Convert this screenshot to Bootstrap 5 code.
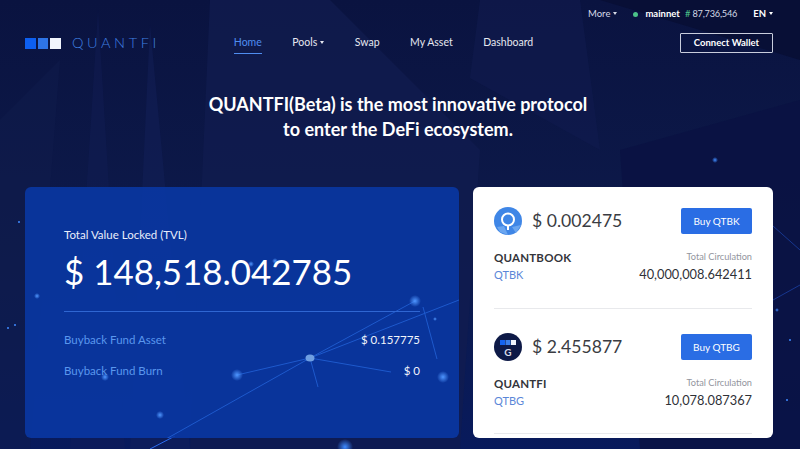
<!DOCTYPE html>
<html lang="en">
<head>
  <meta charset="UTF-8">
  <title>QUANTFI</title>
  <link href="https://cdn.jsdelivr.net/npm/bootstrap@5.3.0/dist/css/bootstrap.min.css" rel="stylesheet">
  <style>
    html, body { height: 449px; overflow: hidden; }
    body { background: #0b1440; font-family: Lato, "Liberation Sans", sans-serif; color: #fff; }
    .page-wrap { height: 449px; overflow: hidden; }
    .bg-art { position: absolute; top: 0; left: 0; width: 800px; height: 449px; z-index: 0; }
    .page-inner { position: relative; z-index: 1; padding: 0 27px 0 25px; }
    .top-bar { height: 28px; font-size: 9.5px; gap: 16px; }
    .top-bar .dropdown-toggle::after, .main-nav .dropdown-toggle::after { margin-left: 3px; border-top-width: 3px; border-left-width: 2.5px; border-right-width: 2.5px; vertical-align: 2px; }
    .top-link { color: #d5d9e6; }
    .net-dot { width: 5px; height: 5px; border-radius: 50%; background: #4cc38a; margin-right: 7px; }
    .block-hash { color: #4cc38a; margin: 0 2px 0 5px; }
    .block-num { font-size: 9.2px; letter-spacing: -.2px; }
    .head-row { height: 28px; margin-top: 1px; }
    .logo-box { gap: 2px; width: 36px; }
    .logo-sq { width: 11px; height: 11px; }
    .logo-text { font-size: 14.5px; font-weight: 300; letter-spacing: 3.6px; color: #3f7fe0; margin-left: 11px; line-height: 1; }
    .main-nav { margin-left: 74px; font-size: 10.5px; gap: 30.5px; }
    .main-nav a { color: #e6e8f0; text-decoration: none; padding: 3px 0 2px; border-bottom: 1px solid transparent; }
    .main-nav a.nav-on { color: #4f8df0; border-bottom-color: #4f8df0; }
    .wallet-btn { width: 93px; height: 20px; border: 1px solid #c9cddd; border-radius: 1px; font-size: 9.5px; font-weight: 700; color: #fff; background: transparent; padding: 0; }
    .hero-title { font-size: 18px; line-height: 25px; font-weight: 700; margin: 35px 0 45px; padding-right: 2px; }
    .panel-row { gap: 14px; height: 251px; }
    .tvl-panel { width: 434px; background: rgba(9, 56, 165, .88); border-radius: 6px; padding: 40px 39px 0; position: relative; }
    .tvl-label { font-size: 11.5px; line-height: 16px; color: #e9eefb; }
    .tvl-value { font-size: 34.9px; line-height: 44px; font-weight: 400; margin: 7px 0 17px; }
    .tvl-rule { height: 1px; background: #2f66d2; margin-bottom: 20px; }
    .fund-row { font-size: 11.5px; line-height: 16px; height: 31px; }
    .fund-name { color: #5a97ee; }
    .fund-value { font-size: 11.5px; color: #f1f4fb; }
    .coin-panel { width: 300px; background: #fff; border-radius: 6px; padding: 20px 21px 0; color: #2f3137; }
    .coin-item { height: 102px; border-bottom: 1px solid #e8e9ec; }
    .coin-item + .coin-item { height: 125px; padding-top: 24px; }
    .coin-price { font-size: 17.6px; line-height: 28px; margin-left: 10px; color: #3a3c42; }
    .coin-icon { width: 28px; height: 28px; display: block; }
    .buy-btn { width: 71px; height: 26px; padding: 0; font-size: 10px; background: #2a6de4; border: 0; border-radius: 2px; color: #fff; }
    .coin-name { font-size: 11.5px; line-height: 16px; font-weight: 700; color: #33353b; letter-spacing: .2px; }
    .coin-sym { font-size: 11px; line-height: 18px; color: #5b87d8; }
    .circ-label { font-size: 9.2px; line-height: 13px; color: #92959d; }
    .circ-value { font-size: 12.8px; line-height: 19px; color: #2f3137; margin-top: 2px; }
    .coin-meta { margin-top: 15px; }
  </style>
</head>
<body>
  <div class="page-wrap position-relative">
    <svg class="bg-art" viewBox="0 0 800 449" aria-hidden="true">
      <defs>
        <linearGradient id="base" x1="0" y1="0" x2="0" y2="1">
          <stop offset="0" stop-color="#0a1340"/>
          <stop offset=".55" stop-color="#0d1a4b"/>
          <stop offset="1" stop-color="#081a5c"/>
        </linearGradient>
        <radialGradient id="glow">
          <stop offset="0" stop-color="#3f8bff"/>
          <stop offset="1" stop-color="#3f8bff" stop-opacity="0"/>
        </radialGradient>
      </defs>
      <rect width="800" height="449" fill="url(#base)"/>
      <polygon points="210,0 330,0 480,150 460,449 190,449" fill="#111d50" opacity=".7"/>
      <polygon points="98,10 70,449 125,449" fill="#13205a" opacity=".35"/>
      <polygon points="150,25 130,449 190,449" fill="#14225c" opacity=".45"/>
      <polygon points="0,120 60,60 30,449 0,449" fill="#101b4c" opacity=".5"/>
      <polygon points="480,0 580,0 600,150 470,78" fill="#101b4e" opacity=".6"/>
      <polygon points="600,0 800,60 800,0" fill="#080f36"/>
      <polygon points="620,150 800,100 800,449 640,449" fill="#0a1242" opacity=".8"/>
      <path d="M150 449 L175 436" stroke="#2c6df0" fill="none"/>
      <path d="M773 226 L800 250 M773 300 L800 285" stroke="#1f4fc0" fill="none" opacity=".6"/>
      <circle cx="715" cy="160" r="3" fill="url(#glow)"/>
      <circle cx="345" cy="447" r="8" fill="url(#glow)"/>
      <circle cx="777" cy="310" r="2" fill="url(#glow)"/>
      <circle cx="19" cy="222" r="1" fill="#3f8bff"/>
      <circle cx="15" cy="325" r="1" fill="#3f8bff"/>
      <circle cx="8" cy="328" r="1" fill="#3f8bff"/>
      <circle cx="787" cy="400" r="1" fill="#3f8bff"/>
      <circle cx="790" cy="340" r="1" fill="#3f8bff"/>
    </svg>

    <div class="page-inner">
      <div class="top-bar d-flex justify-content-end align-items-center">
        <a class="top-link dropdown-toggle text-decoration-none" href="#">More</a>
        <div class="d-flex align-items-center">
          <span class="net-dot"></span><span class="fw-bold">mainnet</span><span class="block-hash">#</span><span class="top-link block-num">87,736,546</span>
        </div>
        <a class="text-white fw-bold dropdown-toggle text-decoration-none" href="#">EN</a>
      </div>

      <div class="head-row d-flex align-items-center">
        <div class="d-flex align-items-center">
          <div class="logo-box d-flex">
            <span class="logo-sq" style="background:#0d5ff0"></span>
            <span class="logo-sq" style="background:#2e74e6"></span>
            <span class="logo-sq" style="background:#f1f5fd"></span>
          </div>
          <span class="logo-text">QUANTFI</span>
        </div>
        <nav class="main-nav d-flex align-items-center">
          <a class="nav-on" href="#">Home</a>
          <a class="dropdown-toggle" href="#">Pools</a>
          <a href="#">Swap</a>
          <a href="#">My Asset</a>
          <a href="#">Dashboard</a>
        </nav>
        <button class="wallet-btn btn ms-auto">Connect Wallet</button>
      </div>

      <h1 class="hero-title text-center">QUANTFI(Beta) is the most innovative protocol<br>to enter the DeFi ecosystem.</h1>

      <div class="panel-row d-flex">
        <section class="tvl-panel">
          <svg class="position-absolute top-0 start-0 w-100 h-100" viewBox="0 0 434 251" aria-hidden="true">
            <defs>
              <radialGradient id="dot">
                <stop offset="0" stop-color="#4f96ff"/>
                <stop offset="1" stop-color="#4f96ff" stop-opacity="0"/>
              </radialGradient>
            </defs>
            <g stroke="#2f78f5" stroke-width="1" fill="none" opacity=".55">
              <path d="M125 261 L285 171 L434 113"/>
              <path d="M285 171 L390 114"/>
              <path d="M212 188 L285 171 L366 185"/>
              <path d="M285 171 L293 200"/>
              <path d="M398 120 L412 172"/>
            </g>
            <ellipse cx="285" cy="171" rx="4.5" ry="3.5" fill="#6f9fe2"/>
            <circle cx="212" cy="188" r="6" fill="url(#dot)"/>
            <circle cx="390" cy="114" r="6" fill="url(#dot)"/>
            <circle cx="418" cy="190" r="6" fill="url(#dot)"/>
            <circle cx="135" cy="228" r="4" fill="url(#dot)"/>
            <circle cx="226" cy="77" r="3" fill="url(#dot)"/>
            <circle cx="250" cy="74" r="3" fill="url(#dot)"/>
            <circle cx="80" cy="190" r="4" fill="url(#dot)"/>
            <circle cx="12" cy="109" r="3" fill="url(#dot)"/>
            <circle cx="410" cy="132" r="2" fill="url(#dot)"/>
          </svg>
          <div class="position-relative">
            <div class="tvl-label">Total Value Locked (TVL)</div>
            <div class="tvl-value">$ 148,518.042785</div>
            <div class="tvl-rule"></div>
            <div class="fund-row d-flex justify-content-between">
              <span class="fund-name">Buyback Fund Asset</span><span class="fund-value">$ 0.157775</span>
            </div>
            <div class="fund-row d-flex justify-content-between">
              <span class="fund-name">Buyback Fund Burn</span><span class="fund-value">$ 0</span>
            </div>
          </div>
        </section>

        <section class="coin-panel">
          <div class="coin-item">
            <div class="d-flex align-items-center">
              <svg class="coin-icon" viewBox="0 0 28 28" aria-hidden="true">
                <circle cx="14" cy="14" r="14" fill="#3f86e6"/>
                <path d="M3 20 L10 19 L14 28 L6 25Z" fill="#6ba6f0"/>
                <path d="M18 20 L27 18 L22 26Z" fill="#6ba6f0"/>
                <circle cx="14" cy="12.5" r="6" fill="none" stroke="#fff" stroke-width="2"/>
                <path d="M14 18.5 V23" stroke="#fff" stroke-width="2"/>
              </svg>
              <span class="coin-price">$ 0.002475</span>
              <button class="buy-btn btn ms-auto">Buy QTBK</button>
            </div>
            <div class="coin-meta d-flex justify-content-between">
              <div>
                <div class="coin-name">QUANTBOOK</div>
                <div class="coin-sym">QTBK</div>
              </div>
              <div class="text-end">
                <div class="circ-label">Total Circulation</div>
                <div class="circ-value">40,000,008.642411</div>
              </div>
            </div>
          </div>
          <div class="coin-item">
            <div class="d-flex align-items-center">
              <svg class="coin-icon" viewBox="0 0 28 28" aria-hidden="true">
                <circle cx="14" cy="14" r="14" fill="#0e1a47"/>
                <rect x="6" y="7" width="5" height="5" fill="#1464f0"/>
                <rect x="11.5" y="7" width="5" height="5" fill="#3b7fe8"/>
                <rect x="17" y="7" width="5" height="5" fill="#f1f5fd"/>
                <text x="14" y="23" text-anchor="middle" font-family="Lato, sans-serif" font-size="10" font-weight="700" fill="#d8dce8">G</text>
              </svg>
              <span class="coin-price">$ 2.455877</span>
              <button class="buy-btn btn ms-auto">Buy QTBG</button>
            </div>
            <div class="coin-meta d-flex justify-content-between">
              <div>
                <div class="coin-name">QUANTFI</div>
                <div class="coin-sym">QTBG</div>
              </div>
              <div class="text-end">
                <div class="circ-label">Total Circulation</div>
                <div class="circ-value">10,078.087367</div>
              </div>
            </div>
          </div>
        </section>
      </div>
    </div>
  </div>
  <script src="https://cdn.jsdelivr.net/npm/bootstrap@5.3.0/dist/js/bootstrap.bundle.min.js"></script>
</body>
</html>
